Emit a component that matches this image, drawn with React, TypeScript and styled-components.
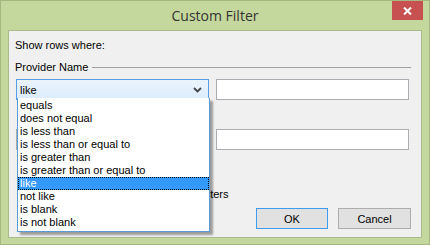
import React from "react";
import styled, { createGlobalStyle } from "styled-components";

const GlobalStyle = createGlobalStyle`
  html, body {
    margin: 0;
    padding: 0;
    overflow: hidden;
    background: #ffffff;
  }
`;

const Window = styled.div`
  box-sizing: border-box;
  width: 430px;
  height: 245px;
  background: #c4d79c;
  border: 1px solid #a3b77f;
  display: flex;
  flex-direction: column;
  font-family: "Liberation Sans", Arial, sans-serif;
  font-size: 11px;
  color: #000;
`;

const TitleBar = styled.div`
  height: 29px;
  display: grid;
  grid-template-columns: 1fr auto 1fr;
`;

const Title = styled.div`
  grid-column: 2;
  font-family: "Open Sans", "Noto Sans", sans-serif;
  font-size: 14px;
  line-height: 30px;
  color: #333333;
`;

const CloseButton = styled.div`
  grid-column: 3;
  justify-self: end;
  width: 31px;
  height: 19px;
  margin-right: 6px;
  background: #c75050;
  color: #fff;
  display: flex;
  align-items: center;
  justify-content: center;
`;

const Client = styled.div`
  position: relative;
  box-sizing: border-box;
  margin: 0 7px 6px 7px;
  flex: 1;
  background: #f0f0f0;
  border: 1px solid #a9bb8b;
  padding: 7px 10px 8px 6px;
  display: flex;
  flex-direction: column;
`;

const Label = styled.div`
  line-height: 14px;
  height: 14px;
`;

const GroupHeader = styled.div`
  display: flex;
  align-items: center;
  gap: 4px;
  margin-top: 8px;
  line-height: 14px;
  &::after {
    content: "";
    flex: 1;
    height: 1px;
    background: #a0a0a0;
    margin-top: 1px;
  }
`;

const Row = styled.div<{ $top: number }>`
  display: flex;
  gap: 7px;
  margin-top: ${({ $top }) => $top}px;
  padding-left: 1px;
`;

const Combo = styled.div<{ $active?: boolean }>`
  box-sizing: border-box;
  width: 193px;
  height: 21px;
  border: 1px solid ${({ $active }) => ($active ? "#569de5" : "#acacac")};
  background: ${({ $active }) =>
    $active ? "linear-gradient(#ebf4fc, #dcecfc)" : "linear-gradient(#f0f0f0, #e5e5e5)"};
  display: flex;
  align-items: center;
  justify-content: space-between;
  padding: 0 6px 0 3px;
`;

const TextBox = styled.div`
  box-sizing: border-box;
  width: 193px;
  height: 21px;
  border: 1px solid #abadb3;
  background: #fff;
`;

const Hint = styled.div<{ $top: number }>`
  margin-top: ${({ $top }) => $top}px;
  padding-left: 5px;
  line-height: 14px;
`;

const Buttons = styled.div`
  margin-top: auto;
  display: flex;
  justify-content: flex-end;
  gap: 10px;
`;

const Button = styled.div<{ $default?: boolean }>`
  box-sizing: border-box;
  width: ${({ $default }) => ($default ? 72 : 73)}px;
  height: 21px;
  border: 1px solid ${({ $default }) => ($default ? "#3c9df0" : "#adadad")};
  background: #e1e1e1;
  display: flex;
  align-items: center;
  justify-content: center;
`;

const DropList = styled.div`
  position: absolute;
  left: 8px;
  top: 67px;
  box-sizing: border-box;
  width: 193px;
  border: 1px solid #5b9bd5;
  border-top: none;
  background: #fff;
  padding: 1px 0 2px 0;
  box-shadow: 3px 3px 2px rgba(0, 0, 0, 0.35);
`;

const Item = styled.div<{ $selected?: boolean }>`
  box-sizing: border-box;
  height: 13px;
  line-height: 12px;
  padding-left: 2px;
  background: ${({ $selected }) => ($selected ? "#3399ff" : "transparent")};
  color: ${({ $selected }) => ($selected ? "#fff" : "#000")};
  outline: ${({ $selected }) => ($selected ? "1px dotted #000" : "none")};
  outline-offset: -1px;
`;

const Chevron = () => (
  <svg width="9" height="6" viewBox="0 0 9 6">
    <path d="M1 1 L4.5 4.5 L8 1" stroke="#444" strokeWidth="1.8" fill="none" />
  </svg>
);

const options = [
  "equals",
  "does not equal",
  "is less than",
  "is less than or equal to",
  "is greater than",
  "is greater than or equal to",
  "like",
  "not like",
  "is blank",
  "is not blank",
];

export default function App() {
  return (
    <>
      <GlobalStyle />
      <Window>
        <TitleBar>
          <Title>Custom Filter</Title>
          <CloseButton>
            <svg width="9" height="8" viewBox="0 0 9 8">
              <path d="M1 0.5 L8 7.5 M8 0.5 L1 7.5" stroke="#fff" strokeWidth="2" />
            </svg>
          </CloseButton>
        </TitleBar>
        <Client>
          <Label>Show rows where:</Label>
          <GroupHeader>Provider Name</GroupHeader>
          <Row $top={5}>
            <Combo $active>
              <span>like</span>
              <Chevron />
            </Combo>
            <TextBox />
          </Row>
          <Row $top={29}>
            <Combo>
              <span></span>
              <Chevron />
            </Combo>
            <TextBox />
          </Row>
          <Hint $top={37}>Use * to represent any series of characters</Hint>
          <Buttons>
            <Button $default>OK</Button>
            <Button>Cancel</Button>
          </Buttons>
          <DropList>
            {options.map((o) => (
              <Item key={o} $selected={o === "like"}>
                {o}
              </Item>
            ))}
          </DropList>
        </Client>
      </Window>
    </>
  );
}
